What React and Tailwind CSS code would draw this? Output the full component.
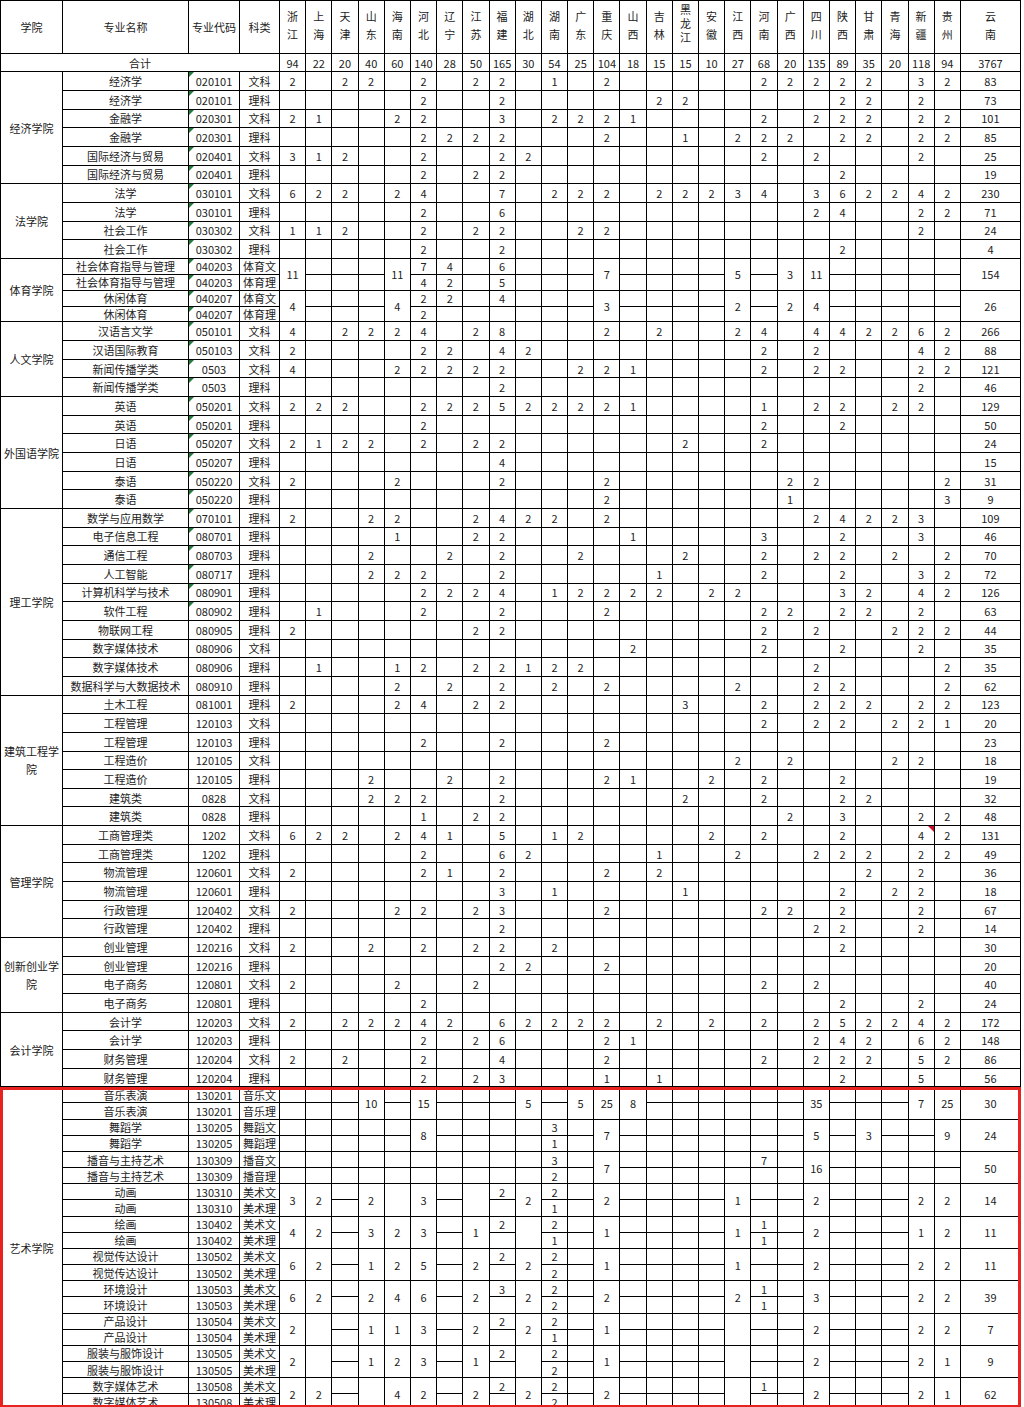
import React from 'react';

const ABBR = '浙沪津鲁琼冀辽苏闽鄂湘粤渝晋吉黑皖赣豫桂川陕甘青新贵云';
const HEAD = ['浙江','上海','天津','山东','海南','河北','辽宁','江苏','福建','湖北','湖南','广东','重庆','山西','吉林','黑龙江','安徽','江西','河南','广西','四川','陕西','甘肃','青海','新疆','贵州','云南'];
const TOTAL = [94,22,20,40,60,140,28,50,165,30,54,25,104,18,15,15,10,27,68,20,135,89,35,20,118,94,3767];
const TRI = new Set(['020101','020301','020401','030101','030302','040203','040207','050101','050103','0503','050201','050207','050220','070101','080701','080703','080717','080901','080902']);
const ARTM = '浙沪鲁琼冀苏鄂渝赣川新贵云';

function parse(s) {
  const a = Array(27).fill('');
  if (!s) return a;
  s.split(' ').forEach((t) => {
    const i = ABBR.indexOf(t[0]);
    if (i >= 0) a[i] = t.slice(1);
  });
  return a;
}

const S = (name, code, type, v, red) => ({ kind: 's', name, code, type, v, red });
const P = (name, code, types, m, top, bot, extra, h) => ({ kind: 'p', name, code, types, m, top, bot, extra, h });

const GROUPS = [
  { college: '经济学院', rows: [
    S('经济学','020101','文科','浙2 津2 鲁2 冀2 苏2 闽2 湘1 渝2 豫2 桂2 川2 陕2 甘2 新3 贵2 云83'),
    S('经济学','020101','理科','冀2 闽2 吉2 黑2 陕2 甘2 新2 云73'),
    S('金融学','020301','文科','浙2 沪1 琼2 冀2 闽3 湘2 粤2 渝2 晋1 豫2 川2 陕2 甘2 新2 贵2 云101'),
    S('金融学','020301','理科','冀2 辽2 苏2 闽2 渝2 黑1 赣2 豫2 桂2 陕2 甘2 新2 贵2 云85'),
    S('国际经济与贸易','020401','文科','浙3 沪1 津2 冀2 闽2 鄂2 豫2 川2 新2 云25'),
    S('国际经济与贸易','020401','理科','冀2 苏2 闽2 陕2 云19'),
  ]},
  { college: '法学院', rows: [
    S('法学','030101','文科','浙6 沪2 津2 琼2 冀4 闽7 湘2 粤2 渝2 吉2 黑2 皖2 赣3 豫4 川3 陕6 甘2 青2 新4 贵2 云230'),
    S('法学','030101','理科','冀2 闽6 川2 陕4 新2 贵2 云71'),
    S('社会工作','030302','文科','浙1 沪1 津2 冀2 苏2 闽2 粤2 渝2 新2 云24'),
    S('社会工作','030302','理科','冀2 闽2 陕2 云4'),
  ]},
  { college: '体育学院', rows: [
    P(['社会体育指导与管理','社会体育指导与管理'],'040203',['体育文','体育理'],'浙11 琼11 渝7 赣5 桂3 川11 云154','冀7 辽4 闽6','冀4 辽2 闽5','','sport'),
    P(['休闲体育','休闲体育'],'040207',['体育文','体育理'],'浙4 琼4 渝3 赣2 桂2 川4 云26','冀2 辽2 闽4','冀2','','sport'),
  ]},
  { college: '人文学院', rows: [
    S('汉语言文学','050101','文科','浙4 津2 鲁2 琼2 冀4 苏2 闽8 渝2 吉2 赣2 豫4 川4 陕4 甘2 青2 新6 贵2 云266'),
    S('汉语国际教育','050103','文科','浙2 冀2 辽2 闽4 鄂2 豫2 川2 新4 贵2 云88'),
    S('新闻传播学类','0503','文科','浙4 琼2 冀2 辽2 苏2 闽2 粤2 渝2 晋1 豫2 川2 陕2 新2 贵2 云121'),
    S('新闻传播学类','0503','理科','闽2 新2 云46'),
  ]},
  { college: '外国语学院', rows: [
    S('英语','050201','文科','浙2 沪2 津2 冀2 辽2 苏2 闽5 鄂2 湘2 粤2 渝2 晋1 豫1 川2 陕2 青2 新2 云129'),
    S('英语','050201','理科','冀2 豫2 陕2 云50'),
    S('日语','050207','文科','浙2 沪1 津2 鲁2 冀2 苏2 闽2 黑2 豫2 云24'),
    S('日语','050207','理科','闽4 云15'),
    S('泰语','050220','文科','浙2 琼2 闽2 渝2 桂2 川2 贵2 云31'),
    S('泰语','050220','理科','渝2 桂1 贵3 云9'),
  ]},
  { college: '理工学院', rows: [
    S('数学与应用数学','070101','理科','浙2 鲁2 琼2 苏2 闽4 鄂2 湘2 渝2 川2 陕4 甘2 青2 新3 云109'),
    S('电子信息工程','080701','理科','琼1 苏2 闽2 晋1 豫3 陕2 新3 云46'),
    S('通信工程','080703','理科','鲁2 辽2 闽2 粤2 黑2 豫2 川2 陕2 青2 贵2 云70'),
    S('人工智能','080717','理科','鲁2 琼2 冀2 闽2 吉1 豫2 陕2 新3 贵2 云72'),
    S('计算机科学与技术','080901','理科','冀2 辽2 苏2 闽4 湘1 粤2 渝2 晋2 吉2 皖2 赣2 陕3 甘2 新4 贵2 云126'),
    S('软件工程','080902','理科','沪1 冀2 闽2 渝2 豫2 桂2 陕2 甘2 新2 云63'),
    S('物联网工程','080905','理科','浙2 苏2 闽2 豫2 川2 青2 新2 贵2 云44'),
    S('数字媒体技术','080906','文科','晋2 豫2 陕2 新2 云35'),
    S('数字媒体技术','080906','理科','沪1 琼1 冀2 苏2 闽2 鄂1 湘2 粤2 川2 贵2 云35'),
    S('数据科学与大数据技术','080910','理科','琼2 辽2 闽2 湘2 渝2 赣2 川2 陕2 贵2 云62'),
  ]},
  { college: '建筑工程学院', rows: [
    S('土木工程','081001','理科','浙2 琼2 冀4 苏2 闽2 黑3 豫2 川2 陕2 甘2 新2 贵2 云123'),
    S('工程管理','120103','文科','豫2 川2 陕2 青2 新2 贵1 云20'),
    S('工程管理','120103','理科','冀2 闽2 渝2 云23'),
    S('工程造价','120105','文科','赣2 桂2 青2 新2 云18'),
    S('工程造价','120105','理科','鲁2 辽2 闽2 渝2 晋1 皖2 豫2 陕2 云19'),
    S('建筑类','0828','文科','鲁2 琼2 冀2 闽2 黑2 豫2 陕2 甘2 云32'),
    S('建筑类','0828','理科','冀1 苏2 闽2 桂2 陕3 新2 贵2 云48'),
  ]},
  { college: '管理学院', rows: [
    S('工商管理类','1202','文科','浙6 沪2 津2 琼2 冀4 辽1 闽5 湘1 粤2 皖2 豫2 陕2 新4 贵2 云131', 24),
    S('工商管理类','1202','理科','冀2 闽6 鄂2 吉1 赣2 川2 陕2 甘2 新2 贵2 云49'),
    S('物流管理','120601','文科','浙2 冀2 辽1 闽2 渝2 吉2 甘2 新2 云36'),
    S('物流管理','120601','理科','闽3 湘1 黑1 陕2 青2 新2 云18'),
    S('行政管理','120402','文科','浙2 琼2 冀2 苏2 闽3 渝2 豫2 桂2 陕2 新2 云67'),
    S('行政管理','120402','理科','闽2 川2 陕2 新2 云14'),
  ]},
  { college: '创新创业学院', rows: [
    S('创业管理','120216','文科','浙2 鲁2 冀2 苏2 闽2 湘2 陕2 云30'),
    S('创业管理','120216','理科','闽2 鄂2 渝2 云20'),
    S('电子商务','120801','文科','浙2 琼2 苏2 豫2 川2 云40'),
    S('电子商务','120801','理科','冀2 陕2 新2 云24'),
  ]},
  { college: '会计学院', rows: [
    S('会计学','120203','文科','浙2 津2 鲁2 琼2 冀4 辽2 闽6 鄂2 湘2 粤2 渝2 吉2 皖2 豫2 川2 陕5 甘2 青2 新4 贵2 云172'),
    S('会计学','120203','理科','冀2 苏2 闽6 渝2 晋1 川2 陕4 甘2 新6 贵2 云148'),
    S('财务管理','120204','文科','浙2 津2 冀2 闽4 渝2 豫2 川2 陕2 甘2 新5 贵2 云86'),
    S('财务管理','120204','理科','冀2 苏2 闽3 渝1 吉1 陕2 新5 云56'),
  ]},
  { college: '艺术学院', rows: [
    P(['音乐表演','音乐表演'],'130201',['音乐文','音乐理'],'鲁10 冀15 鄂5 粤5 渝25 晋8 川35 新7 贵25 云30','','','','art'),
    P(['舞蹈学','舞蹈学'],'130205',['舞蹈文','舞蹈理'],'冀8 渝7 川5 甘3 贵9 云24','湘3','湘1','','art'),
    P(['播音与主持艺术','播音与主持艺术'],'130309',['播音文','播音理'],'渝7 川16 云50','湘3 豫7','湘2','','art'),
    P(['动画','动画'],'130310',['美术文','美术理'],'浙3 沪2 鲁2 冀3 鄂2 渝2 赣1 川2 新2 贵2 云14','闽2 湘2','湘1',ARTM,'art'),
    P(['绘画','绘画'],'130402',['美术文','美术理'],'浙4 沪2 鲁3 琼2 冀3 苏1 渝1 赣1 川2 新1 贵2 云11','闽2 湘2 豫1','湘1 豫1',ARTM,'art'),
    P(['视觉传达设计','视觉传达设计'],'130502',['美术文','美术理'],'浙6 沪2 鲁1 琼2 冀5 苏2 鄂2 渝1 赣1 川2 新2 贵2 云11','闽2 湘2','湘2',ARTM,'art'),
    P(['环境设计','环境设计'],'130503',['美术文','美术理'],'浙6 沪2 鲁2 琼4 冀6 苏2 鄂2 渝2 赣2 川3 新2 贵2 云39','闽3 湘2 豫1','湘2 豫1',ARTM,'art'),
    P(['产品设计','产品设计'],'130504',['美术文','美术理'],'浙2 鲁1 琼1 冀3 苏2 鄂2 渝1 川2 新2 贵2 云7','闽2 湘2','湘1',ARTM,'art'),
    P(['服装与服饰设计','服装与服饰设计'],'130505',['美术文','美术理'],'浙2 鲁1 琼2 冀3 苏1 渝1 川2 新2 贵1 云9','闽2 湘2','湘2',ARTM,'art'),
    P(['数字媒体艺术','数字媒体艺术'],'130508',['美术文','美术理'],'浙2 沪2 琼4 冀2 苏2 鄂2 渝2 川2 新2 贵1 云62','闽2 湘2 豫1','湘2',ARTM,'art'),
  ]},
];

const td = 'border border-black p-0 text-center whitespace-nowrap';

function CodeCell({ code, rowSpan }) {
  return (
    <td rowSpan={rowSpan} className={td + ' relative'}>
      {TRI.has(code) && (
        <span className="absolute left-0 top-0 h-0 w-0 border-t-[5px] border-r-[5px] border-t-[#217a3c] border-r-transparent" />
      )}
      {code}
    </td>
  );
}

function buildRows() {
  const out = [];
  GROUPS.forEach((g, gi) => {
    const n = g.rows.reduce((s, r) => s + (r.kind === 'p' ? 2 : 1), 0);
    let first = true;
    const collegeCell = () => {
      if (!first) return null;
      first = false;
      return (
        <td rowSpan={n} className="border border-black p-0 text-center leading-[18px]">
          {g.college}
        </td>
      );
    };
    g.rows.forEach((r, ri) => {
      if (r.kind === 's') {
        const v = parse(r.v);
        out.push(
          <tr key={`${gi}-${ri}`} className="h-[18.67px]">
            {collegeCell()}
            <td className={td}>{r.name}</td>
            <CodeCell code={r.code} />
            <td className={td}>{r.type}</td>
            {v.map((x, i) => (
              <td key={i} className={td + (r.red === i ? ' relative' : '')}>
                {r.red === i && (
                  <span className="absolute right-0 top-0 h-0 w-0 border-t-[6px] border-l-[6px] border-t-[#c8102e] border-l-transparent" />
                )}
                {x}
              </td>
            ))}
          </tr>
        );
      } else {
        const m = parse(r.m);
        const top = parse(r.top);
        const bot = parse(r.bot);
        const mset = new Set();
        m.forEach((x, i) => { if (x) mset.add(i); });
        for (const ch of r.extra) mset.add(ABBR.indexOf(ch));
        const h = r.h === 'sport' ? 'h-[15.9px]' : 'h-[16.17px]';
        out.push(
          <tr key={`${gi}-${ri}-a`} className={h}>
            {collegeCell()}
            <td className={td}>{r.name[0]}</td>
            <CodeCell code={r.code} />
            <td className={td}>{r.types[0]}</td>
            {m.map((x, i) =>
              mset.has(i) ? (
                <td key={i} rowSpan={2} className={td}>{x}</td>
              ) : (
                <td key={i} className={td}>{top[i]}</td>
              )
            )}
          </tr>
        );
        out.push(
          <tr key={`${gi}-${ri}-b`} className={h}>
            <td className={td}>{r.name[1]}</td>
            <CodeCell code={r.code} />
            <td className={td}>{r.types[1]}</td>
            {bot.map((x, i) => (mset.has(i) ? null : <td key={i} className={td}>{x}</td>))}
          </tr>
        );
      }
    });
  });
  return out;
}

export default function App() {
  return (
    <div className="relative h-[1407px] w-[1024px] overflow-hidden bg-white font-['Noto_Sans_CJK_SC','Noto_Sans',sans-serif] text-[11px] leading-[14px] text-[#222]">
      <table className="w-[1021px] table-fixed border-collapse">
        <colgroup>
          <col className="w-[62px]" />
          <col className="w-[126px]" />
          <col className="w-[51px]" />
          <col className="w-[40px]" />
          {HEAD.slice(0, 26).map((h) => (
            <col key={h} className="w-[26.2px]" />
          ))}
          <col className="w-[60px]" />
        </colgroup>
        <tbody>
          <tr className="h-[53.3px]">
            <td className={td}>学院</td>
            <td className={td}>专业名称</td>
            <td className={td}>专业代码</td>
            <td className={td}>科类</td>
            {HEAD.map((h) =>
              h.length === 3 ? (
                <td key={h} className={td + ' pb-[8px] leading-[14.3px]'}>
                  {h[0]}<br />{h[1]}<br />{h[2]}
                </td>
              ) : (
                <td key={h} className={td + ' pb-[4px] leading-[18.3px]'}>
                  {h[0]}<br />{h[1]}
                </td>
              )
            )}
          </tr>
          <tr className="h-[18px]">
            <td colSpan={4} className={td}>合计</td>
            {TOTAL.map((t, i) => (
              <td key={i} className={td}>{t}</td>
            ))}
          </tr>
          {buildRows()}
        </tbody>
      </table>
      <div className="pointer-events-none absolute left-0 top-[1087px] h-[321px] w-[1021px] border-[3px] border-[#e8231f]" />
    </div>
  );
}
